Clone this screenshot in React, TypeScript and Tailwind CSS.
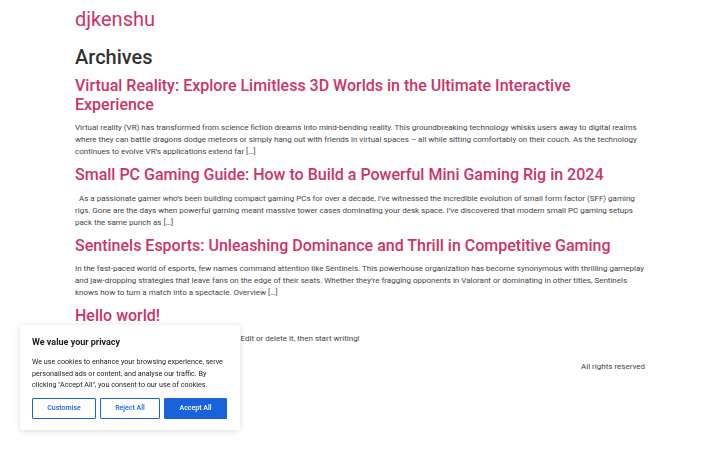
const posts = [
  {
    title: 'Virtual Reality: Explore Limitless 3D Worlds in the Ultimate Interactive Experience',
    excerpt:
      'Virtual reality (VR) has transformed from science fiction dreams into mind-bending reality. This groundbreaking technology whisks users away to digital realms where they can battle dragons dodge meteors or simply hang out with friends in virtual spaces – all while sitting comfortably on their couch. As the technology continues to evolve VR’s applications extend far […]',
  },
  {
    title: 'Small PC Gaming Guide: How to Build a Powerful Mini Gaming Rig in 2024',
    excerpt:
      '\u00a0 As a passionate gamer who’s been building compact gaming PCs for over a decade, I’ve witnessed the incredible evolution of small form factor (SFF) gaming rigs. Gone are the days when powerful gaming meant massive tower cases dominating your desk space. I’ve discovered that modern small PC gaming setups pack the same punch as […]',
  },
  {
    title: 'Sentinels Esports: Unleashing Dominance and Thrill in Competitive Gaming',
    excerpt:
      'In the fast-paced world of esports, few names command attention like Sentinels. This powerhouse organization has become synonymous with thrilling gameplay and jaw-dropping strategies that leave fans on the edge of their seats. Whether they’re fragging opponents in Valorant or dominating in other titles, Sentinels knows how to turn a match into a spectacle. Overview […]',
  },
  {
    title: 'Hello world!',
    excerpt: 'Welcome to WordPress. This is your first post. Edit or delete it, then start writing!',
  },
];

export default function App() {
  return (
    <div className="min-h-[450px] bg-white font-['Roboto',sans-serif] text-[#444444]">
      {/* Header */}
      <header className="w-[570px] mx-auto pt-[7px]">
        <a className="block text-[20px] leading-[24px] text-[#cc3366]">djkenshu</a>
      </header>

      {/* Archive list */}
      <main className="w-[570px] mx-auto">
        <h1 className="mt-[14px] text-[20px] leading-[24px] font-medium text-[#333333]">Archives</h1>
        <div className="pt-[7px]">
          {posts.map((post, i) => (
            <article key={post.title} className={i === 0 ? '' : 'mt-[7px]'}>
              <h2 className="text-[16px] leading-[1.2] font-medium text-[#cc3366]">{post.title}</h2>
              <p className="mt-[8px] text-[8px] leading-[12px]">{post.excerpt}</p>
            </article>
          ))}
        </div>
      </main>

      {/* Footer */}
      <footer className="w-[570px] mx-auto mt-[16px] text-right text-[8px] leading-[12px]">
        All rights reserved
      </footer>

      {/* Cookie banner */}
      <div className="fixed left-[20px] bottom-[20px] w-[220px] bg-white rounded-[3px] shadow-[0_1px_6px_rgba(0,0,0,0.15)] px-[12px] pt-[12px] pb-[11px]">
        <p className="text-[9px] leading-[11px] font-bold text-[#212121]">We value your privacy</p>
        <p className="mt-[8px] text-[7.2px] leading-[11.7px] text-[#212121]">
          We use cookies to enhance your browsing experience, serve personalised ads or content, and analyse our
          traffic. By clicking "Accept All", you consent to our use of cookies.
        </p>
        <div className="mt-[7px] flex gap-[4px]">
          <button className="w-[64px] h-[21px] border border-[#1863dc] rounded-[1px] text-[7px] font-medium text-[#1863dc]">
            Customise
          </button>
          <button className="w-[60px] h-[21px] border border-[#1863dc] rounded-[1px] text-[7px] font-medium text-[#1863dc]">
            Reject All
          </button>
          <button className="w-[63px] h-[21px] border border-[#1863dc] bg-[#1863dc] rounded-[1px] text-[7px] font-medium text-white">
            Accept All
          </button>
        </div>
      </div>
    </div>
  );
}
